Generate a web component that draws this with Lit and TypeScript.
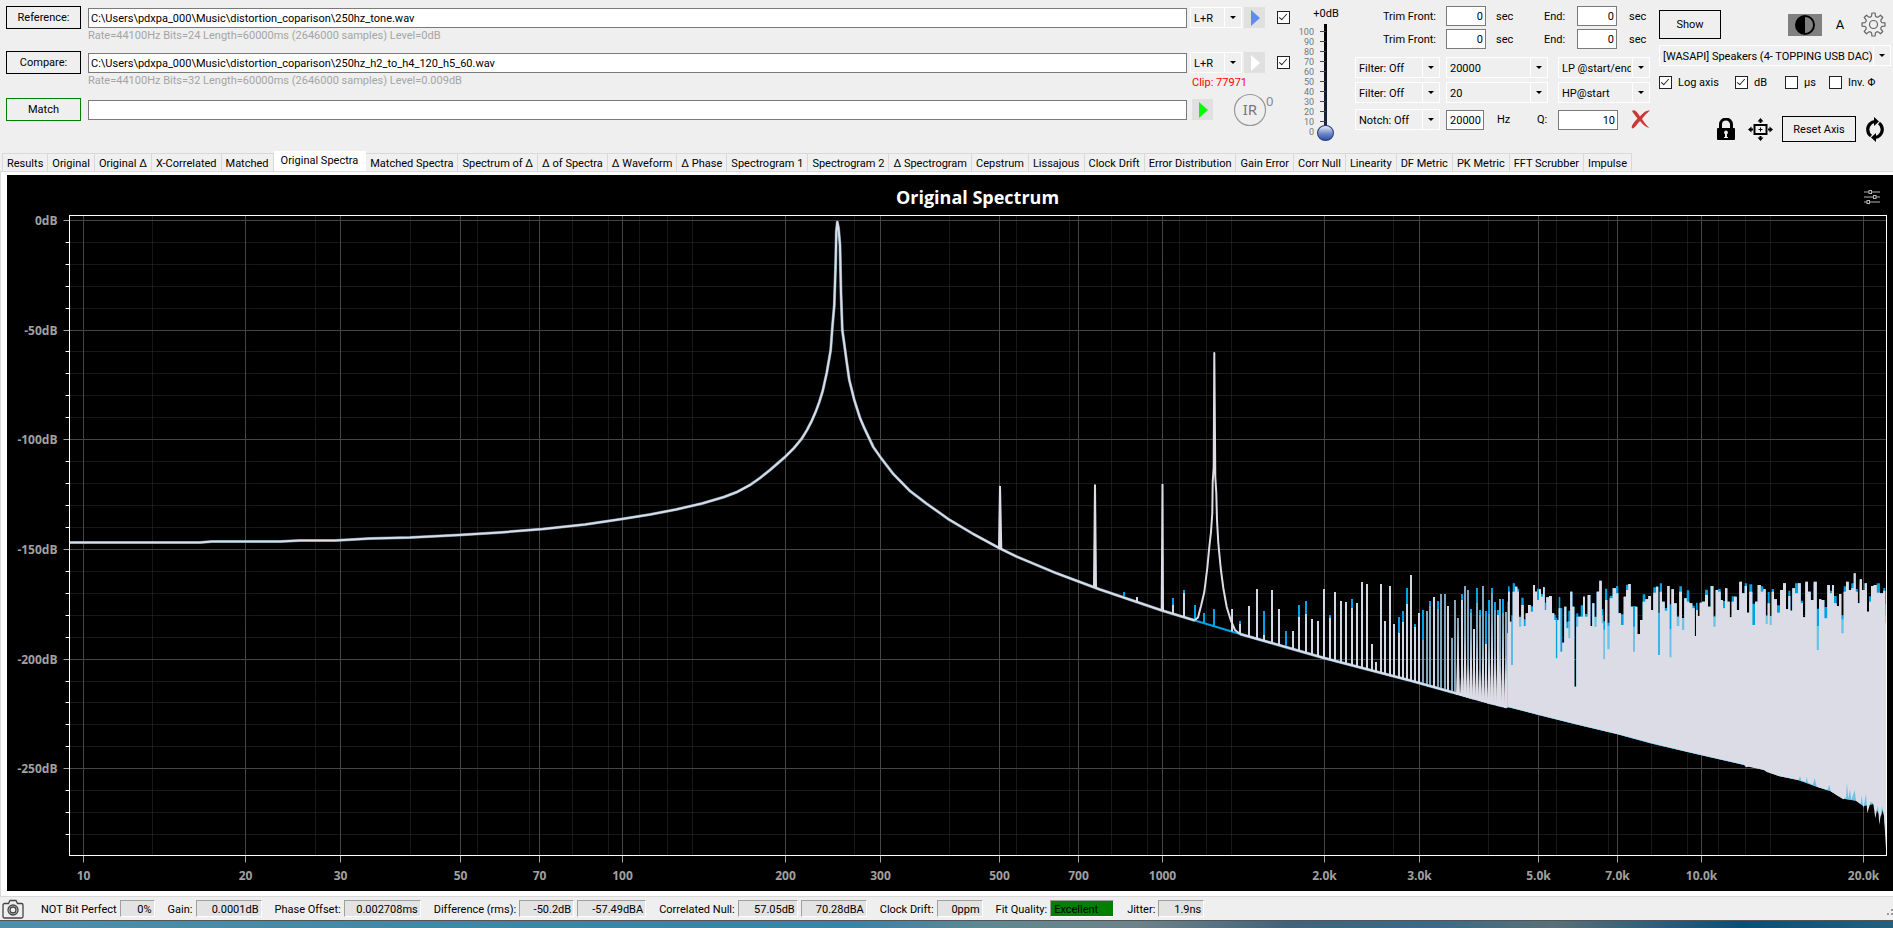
import { LitElement, html, svg, css } from "lit";
import { customElement, state, property } from "lit/decorators.js";

type Pt = [number, number];

const controls = css`
  *, *::before, *::after { box-sizing: border-box; }
  button, input, select, output { font: inherit; color: inherit; margin: 0; }
  button { padding: 0; border: 0; background: none; }
  svg { display: block; }
`;

/* ---------- Combo box ---------- */
@customElement("combo-box")
class ComboBox extends LitElement {
  @property({ type: Array }) options: string[] = [];
  @property() label = "";
  static styles = [controls, css`
    :host { display: block; position: relative; height: 21px; font: 11px/13px Roboto, "Liberation Sans", sans-serif; color: #000; }
    select { appearance: none; display: block; width: 100%; height: 100%; border: 1px solid #fff; border-radius: 0; background: #efefef; padding: 1px 18px 0 3px; }
    svg { position: absolute; right: 1px; top: 1px; width: 17px; height: calc(100% - 2px); background: #efefef; border-left: 1px solid #fff; pointer-events: none; }
  `];
  render() {
    return html`<select aria-label=${this.label}>${this.options.map((o) => html`<option>${o}</option>`)}</select>
      <svg viewBox="0 0 16 19"><path d="M5 8h6l-3 3z" fill="#000"/></svg>`;
  }
}

/* ---------- Spectrum trace data, in plot units ---------- */
const BOX = { x: 69.5, y: 215.5, w: 1817, h: 640 };

const CURVE: Pt[] = [
  [69, 542.5], [200, 542.5], [212, 541.5], [280, 541.5], [300, 540.5], [335, 540.5], [370, 538.5], [410, 537.5], [459, 535], [500, 532.5],
  [543, 529], [585, 524.5], [622, 519], [650, 514.5], [676, 509.5], [702, 503.5], [724, 497], [737, 492], [750, 485], [760, 478], [770, 470],
  [785, 457], [794, 448], [801.7, 438.7], [807, 430], [811.7, 421], [816, 411], [819.3, 402], [822.7, 391], [826.7, 373], [830.7, 350],
  [832.3, 328], [834.3, 305], [835.7, 262], [836.3, 232], [837.3, 222], [838.5, 228], [840, 245], [841, 293], [842.3, 330], [844, 342],
  [846.7, 362], [849.3, 380], [854.3, 400], [860, 418], [864.3, 428], [873.3, 447], [881, 458], [893.3, 474], [910, 491], [926.7, 503.7],
  [949.3, 519.7], [973.3, 534], [1000, 548.5], [1016.7, 556.7], [1056.7, 573.3], [1093.3, 587], [1100, 589.5], [1162, 610.5], [1195, 620.5],
];
const FLOOR: Pt[] = [[1195, 620.5], [1240, 634], [1324, 658], [1412, 681], [1490, 702.7], [1507, 707]];
const FIFTH: Pt[] = [
  [1195, 620], [1198, 617.5], [1201, 606], [1204.3, 592], [1207.3, 568], [1209.3, 547], [1211, 532], [1212.3, 513], [1212.7, 482],
  [1213.7, 467], [1214.3, 353], [1215.3, 477], [1216.3, 493], [1217, 520], [1218.3, 543], [1220.7, 568], [1223.3, 588], [1226.7, 607],
  [1230.7, 620], [1235, 630], [1240, 634],
];

// column, level of the compare trace, level of the reference trace (0 = absent)
const SPIKES: [number, number, number][] = [
  [1124, 0, 592], [1137, 597, 0], [1173, 605, 598], [1184, 593, 590], [1195, 0, 605], [1204, 0, 613], [1214, 0, 609], [1232, 609, 0],
  [1240, 624, 621], [1249, 606, 607], [1257, 589, 589], [1264, 635, 611], [1272, 590, 590], [1279, 609, 640], [1286, 0, 631], [1293, 631, 0],
  [1299, 617, 605], [1306, 614, 601], [1312, 619, 0], [1318, 621, 0], [1324, 589, 590], [1330, 618, 615], [1335, 592, 0], [1341, 601, 625],
  [1346, 602, 640], [1352, 608, 599], [1357, 603, 604], [1362, 582, 600], [1367, 584, 585], [1372, 644, 644], [1376, 662, 0], [1381, 584, 590],
  [1385, 621, 0], [1390, 586, 600], [1394, 624, 630], [1399, 633, 617], [1403, 622, 611], [1407, 604, 588], [1411, 575, 580], [1415, 627, 624],
  [1419, 613, 614], [1423, 640, 610], [1427, 611, 611], [1430, 606, 601], [1434, 597, 600], [1438, 609, 601], [1441, 594, 600], [1445, 594, 610],
  [1448, 606, 610], [1452, 638, 640], [1455, 600, 601], [1458, 618, 620], [1462, 600, 594], [1465, 586, 590], [1468, 590, 600], [1471, 613, 609],
  [1474, 629, 630], [1477, 603, 588], [1480, 615, 610], [1483, 586, 590], [1486, 644, 611], [1489, 614, 600], [1492, 593, 588], [1495, 610, 602],
  [1498, 615, 610], [1500, 599, 600], [1503, 613, 599], [1506, 612, 620],
];

// Dense part of the spectrum: thirds of a plot unit from (1490, 560)
const TOP: Pt[] = [
  [52, 220], [56, 95], [62, 185], [66, 315], [70, 95], [80, 80], [84, 95], [90, 200], [98, 135], [104, 198], [110, 160], [118, 135], [126, 155],
  [132, 75], [138, 95], [144, 120], [150, 88], [156, 110], [162, 82], [166, 150], [172, 112], [182, 108], [190, 160], [195, 180], [200, 295],
  [204, 180], [208, 145], [214, 275], [220, 248], [226, 140], [232, 205], [238, 235], [244, 95], [250, 140], [256, 380], [262, 200], [268, 170],
  [276, 170], [282, 110], [288, 170], [298, 105], [304, 198], [310, 130], [316, 200], [324, 95], [332, 62], [338, 190], [342, 298], [348, 120],
  [356, 268], [362, 115], [374, 85], [382, 100], [388, 160], [398, 195], [404, 110], [412, 90], [418, 72], [426, 140], [432, 275], [438, 140],
  [446, 222], [454, 180], [462, 125], [470, 118], [480, 108], [486, 150], [494, 98], [502, 80], [507, 285], [512, 95], [520, 125], [528, 152],
  [536, 78], [541, 292], [548, 88], [556, 130], [564, 198], [572, 95], [580, 210], [586, 115], [594, 125], [602, 130], [612, 145], [616, 228],
  [620, 150], [626, 168], [632, 128], [640, 125], [650, 105], [658, 140], [666, 78], [674, 200], [680, 90], [688, 95], [696, 120], [702, 145],
  [708, 85], [716, 125], [722, 172], [728, 125], [736, 110], [744, 150], [752, 65], [760, 100], [768, 78], [774, 158], [782, 95], [792, 195],
  [798, 125], [808, 75], [816, 95], [824, 88], [830, 192], [836, 130], [842, 195], [848, 95], [856, 118], [866, 158], [874, 90], [884, 70],
  [892, 148], [898, 108], [904, 152], [910, 85], [920, 100], [928, 70], [936, 130], [942, 172], [950, 65], [958, 95], [966, 120], [976, 65],
  [984, 270], [990, 118], [998, 120], [1008, 175], [1016, 75], [1024, 100], [1028, 75], [1036, 130], [1044, 138], [1050, 102], [1058, 220],
  [1064, 95], [1072, 65], [1080, 90], [1088, 85], [1094, 40], [1100, 95], [1106, 130], [1112, 58], [1120, 90], [1128, 70], [1134, 155],
  [1140, 125], [1146, 78], [1156, 75], [1164, 98], [1176, 100], [1184, 92], [1188, 190],
];
const BOTTOM: Pt[] = [
  [52, 440], [148, 465], [256, 492], [382, 522], [486, 550], [592, 575], [634, 585], [700, 600], [762, 614], [768, 622], [776, 620], [822, 630],
  [830, 636], [866, 648], [926, 660], [930, 648], [934, 662], [948, 666], [950, 650], [954, 668], [968, 674], [974, 655], [980, 680], [1012, 690],
  [1018, 674], [1022, 694], [1040, 706], [1060, 718], [1068, 712], [1071, 668], [1075, 715], [1080, 688], [1084, 720], [1094, 690], [1098, 722],
  [1112, 732], [1115, 706], [1120, 745], [1128, 702], [1132, 760], [1142, 725], [1150, 730], [1156, 775], [1164, 735], [1168, 795], [1176, 738],
  [1182, 768], [1188, 868],
];
const BOTTOM_REF: Pt[] = [
  [52, 441], [148, 466], [256, 493], [382, 523], [486, 551], [592, 576], [634, 586], [700, 601], [762, 615], [822, 630], [866, 648], [926, 661],
  [980, 680], [1022, 694], [1060, 716], [1098, 722], [1120, 738], [1150, 732], [1172, 770], [1180, 745], [1188, 830],
];

const dense = ([x, y]: Pt): Pt => [1490 + x / 3, 560 + y / 3];
const line = (pts: Pt[]) => pts.map(([x, y]) => `${x.toFixed(1)},${y.toFixed(1)}`).join(" ");

// Steps halfway between neighbouring bins, so every bin shows as a flat column
function columns(pts: Pt[]): Pt[] {
  const out: Pt[] = [];
  pts.forEach(([x, y], i) => {
    const l = i ? (pts[i - 1][0] + x) / 2 : x;
    const r = i < pts.length - 1 ? (pts[i + 1][0] + x) / 2 : x;
    out.push([l, y], [r, y]);
  });
  return out;
}

function floorAt(x: number): number {
  const pts = [...CURVE.slice(-4), ...FLOOR.slice(1)];
  for (let i = 1; i < pts.length; i++) {
    if (x <= pts[i][0]) {
      const [a, b] = [pts[i - 1], pts[i]];
      return a[1] + ((x - a[0]) / (b[0] - a[0])) * (b[1] - a[1]);
    }
  }
  return pts[pts.length - 1][1];
}

const DARK = [256, 446, 616, 722, 220, 304];
const BLUE_TOP: Pt[] = TOP.map(([x, y], i) => {
  if (DARK.includes(x)) return [x, y];
  const lift = [0, 16, 0, 0, 34, 0, 8, 0, 22, 0, 0][i % 11];
  return [x, y > 188 ? Math.min(y, 125 + ((i * 37) % 70)) : Math.max(70, y - lift)];
});
const LIGHT_TOP: Pt[] = TOP.map(([x, y], i) => [x, y > 188 && i % 3 && !DARK.includes(x) ? y - (y - 150) * 0.6 : y]);
const area = (top: Pt[], bottom: Pt[]) => line([...columns(top.map(dense)), ...[...bottom].reverse().map(dense)]);

/* ---------- Spectrum chart ---------- */
const MAJOR: [number, string][] = [
  [10, "10"], [20, "20"], [30, "30"], [50, "50"], [70, "70"], [100, "100"], [200, "200"], [300, "300"], [500, "500"], [700, "700"],
  [1000, "1000"], [2000, "2.0k"], [3000, "3.0k"], [5000, "5.0k"], [7000, "7.0k"], [10000, "10.0k"], [20000, "20.0k"],
];

@customElement("spectrum-chart")
class SpectrumChart extends LitElement {
  @state() w = 1886;
  @state() h = 680;
  private ro?: ResizeObserver;
  static styles = [controls, css`
    :host { display: flex; flex-direction: column; background: #000; min-width: 0; min-height: 300px; }
    header { display: flex; align-items: center; height: 36px; padding: 8px 13px 0 84px; color: #fff; flex: none; }
    h1 { flex: 1; margin: 0; text-align: center; font: 700 18px/28px "Open Sans", "Noto Sans", sans-serif; }
    .view { flex: 1; min-height: 0; position: relative; }
    .view > svg { position: absolute; inset: 0; }
    text { font: 700 12px "Open Sans", "Noto Sans", sans-serif; fill: #a0a0a0; }
    .major { stroke: #454545; }
    .minor { stroke: #333; stroke-dasharray: 1 1; }
    .tick { stroke: #a6a6a6; }
    .frame { fill: none; stroke: #fff; }
    .tw { stroke: #fff; }
    .trace { fill: none; vector-effect: non-scaling-stroke; stroke-linejoin: round; }
    .glow { stroke: #7fb2cf; stroke-width: 3px; opacity: .7; }
    .white { stroke: #dcdce6; stroke-width: 2px; }
    .blue { stroke: #00a2e8; stroke-width: 2px; }
    .thin { stroke: #cfd8e4; stroke-width: 2px; }
    .soft { stroke: #7fa6bd; stroke-width: 2px; }
  `];
  firstUpdated() {
    const view = this.renderRoot.querySelector(".view")!;
    this.ro = new ResizeObserver(() => {
      const r = view.getBoundingClientRect();
      this.w = Math.round(r.width);
      this.h = Math.round(r.height);
    });
    this.ro.observe(view);
  }
  disconnectedCallback() {
    super.disconnectedCallback();
    this.ro?.disconnect();
  }
  render() {
    const { w, h } = this;
    const L = 62.5, T = 4.5, R = w - 6.5, B = h - 35.5;
    const px = (f: number) => Math.floor(L + ((13.9 + 539.3 * Math.log10(f / 10)) / BOX.w) * (R - L)) + 0.5;
    const py = (db: number) => Math.floor(T + ((4.8 - db * 2.194) / BOX.h) * (B - T)) + 0.5;
    const minorF: number[] = [];
    for (const d of [10, 100, 1000, 10000]) for (let n = 1; n <= 8; n++) if (n * 1.345 * d < 14000) minorF.push(n * 1.345 * d);
    minorF.push(121, 1210, 12100);
    const dbs = Array.from({ length: 29 }, (_, i) => -10 * i);
    return html`
      <header><h1>Original Spectrum</h1>
        <button aria-label="Chart options"><svg width="16" height="16" viewBox="0 0 16 16" fill="none" stroke="#b4b4b4"><path d="M0 3h5M8 3h8M0 8h9M12 8h4M0 13h3M6 13h10"/><rect x="5" y="1.500" width="2.500" height="3"/><rect x="9.500" y="6.500" width="2.500" height="3"/><rect x="3" y="11.500" width="2.500" height="3"/></svg></button>
      </header>
      <div class="view"><svg width=${w} height=${h} role="img" aria-label="Spectrum level against frequency">
        ${minorF.map((f) => svg`<path class="minor" d="M${px(f)} ${T}V${B}"/>`)}
        ${dbs.map((d) => d % 50
          ? svg`<path class="minor" d="M${L} ${py(d)}H${R}"/><path class="tw" d="M${L - 4} ${py(d)}H${L}"/>`
          : svg`<path class="major" d="M${L} ${py(d)}H${R}"/><path class="tick" d="M${L - 6} ${py(d)}H${L}"/>
                <text x=${L - 12} y=${py(d) + 4} text-anchor="end">${d}dB</text>`)}
        ${MAJOR.map(([f, t]) => svg`<path class="major" d="M${px(f)} ${T}V${B}"/><path class="tick" d="M${px(f)} ${B}V${B + 7}"/>
                <text x=${px(f)} y=${B + 24} text-anchor="middle">${t}</text>`)}
        <svg x=${L} y=${T} width=${R - L} height=${B - T} viewBox="${BOX.x} ${BOX.y} ${BOX.w} ${BOX.h}" preserveAspectRatio="none">
          <polyline class="trace blue" points=${line(FLOOR)}/>
          <polyline class="trace glow" points=${line(CURVE)}/>
          <polyline class="trace glow" points=${line(FLOOR.slice(1))}/>
          ${SPIKES.map(([x, c, r], i) => svg`
            ${r ? svg`<path class="trace blue" d="M${x} ${floorAt(x)}V${r}"/>` : null}
            ${c ? svg`<path class="trace ${x > 1417 && i % 4 ? "soft" : "thin"}" d="M${x} ${floorAt(x)}V${c}"/>` : null}
            ${x > 1455 ? svg`<path fill="#dcdce6" d="M${x - 2} ${floorAt(x) + 1}L${x} ${floorAt(x) - 30 - ((i * 29) % 60)}L${x + 2} ${floorAt(x) + 1}z"/>` : null}`)}
          <polyline class="trace white" points=${line(CURVE)}/>
          <polyline class="trace white" points=${line(FLOOR.slice(1))}/>
          <polyline class="trace white" points=${line(FIFTH)}/>
          <polygon fill="#dcdce6" points="998,548 999,486 1001,486 1002.300,549"/>
          <polygon fill="#dcdce6" points="1093,586 1094,484.500 1096,484.500 1097,588"/>
          <polygon fill="#dcdce6" points="1160.700,610 1161.500,484 1163.500,484 1164,611"/>
          <polygon fill="#00a2e8" points=${area(BLUE_TOP, BOTTOM_REF)}/>
          <polygon fill="#6fc2e6" points=${area(LIGHT_TOP, BOTTOM_REF)}/>
          <polygon fill="#dcdce6" points=${area(TOP, BOTTOM)}/>
        </svg>
        <rect class="frame" x=${L} y=${T} width=${R - L} height=${B - T}/>
      </svg></div>`;
  }
}

/* ---------- Application window ---------- */
const TABS = ["Results", "Original", "Original Δ", "X-Correlated", "Matched", "Original Spectra", "Matched Spectra", "Spectrum of Δ",
  "Δ of Spectra", "Δ Waveform", "Δ Phase", "Spectrogram 1", "Spectrogram 2", "Δ Spectrogram", "Cepstrum", "Lissajous", "Clock Drift",
  "Error Distribution", "Gain Error", "Corr Null", "Linearity", "DF Metric", "PK Metric", "FFT Scrubber", "Impulse"];

const STATUS: [string, [string, string][]][] = [
  ["NOT Bit Perfect", [["0%", "w34"]]],
  ["Gain:", [["0.0001dB", "w66"]]],
  ["Phase Offset:", [["0.002708ms", "w77"]]],
  ["Difference (rms):", [["-50.2dB", "w56"], ["-57.49dBA", "w70"]]],
  ["Correlated Null:", [["57.05dB", "w60"], ["70.28dBA", "w66"]]],
  ["Clock Drift:", [["0ppm", "w45"]]],
  ["Fit Quality:", [["Excellent", "good"]]],
  ["Jitter:", [["1.9ns", "w45"]]],
];

@customElement("app-root")
class AppRoot extends LitElement {
  @state() tab = "Original Spectra";
  static styles = [controls, css`
    :host { display: flex; flex-direction: column; min-height: 100vh; background: #efefef; color: #000; font: 11px/13px Roboto, "Liberation Sans", sans-serif; }
    .bar { display: flex; align-items: flex-start; padding: 6px 2px 0 6px; height: 152px; }
    .files { flex: 1; min-width: 0; margin-right: 7px; }
    .file { display: flex; align-items: center; height: 23px; }
    .info { display: flex; justify-content: space-between; color: #a5a5a5; padding-left: 82px; }
    .info.a { height: 22px; }
    .info.b { height: 24px; }
    .clip { width: 98px; color: #f00; padding-top: 2px; }
    .cmd { border: 1px solid #000; background: #efefef; height: 23px; width: 75px; flex: none; margin-right: 7px; }
    .cmd.go { border-color: #008000; }
    .field { border: 1px solid #7a7a7a; background: #fff; height: 20px; padding: 1px 2px 0; border-radius: 0; min-width: 0; }
    .path { flex: 1; }
    .num { text-align: right; width: 40px; }
    .tail { display: flex; align-items: center; width: 103px; flex: none; padding-left: 3px; }
    .tail combo-box { width: 52px; margin-right: 2px; }
    .play { width: 21px; height: 21px; background: #e0e0e0; flex: none; }
    .play svg { margin-left: 7px; }
    .tick { appearance: none; width: 13px; height: 13px; border: 1px solid #222; background: #fff; position: relative; flex: none; }
    .tick:checked::after { content: ""; position: absolute; left: 3px; top: 0; width: 4px; height: 8px; border: solid #222; border-width: 0 1px 1px 0; transform: rotate(42deg); }
    .tail .tick { margin-left: 12px; }
    .tail .match { margin-left: 2px; margin-right: 20px; }
    .ir { display: flex; }

    .gain { width: 50px; margin-right: 8px; }
    .gain label { display: block; text-align: center; padding-left: 8px; line-height: 15px; }
    .scale { display: grid; grid-template-columns: 17px 3px 17px; justify-content: start; margin-top: 3px; }
    .marks { display: grid; grid-template-rows: repeat(11, 10px); font-size: 9px; line-height: 10px; color: #777; text-align: right; padding-top: 3px; }
    .ticks { padding-top: 4px; position: relative; left: 6px; }
    .range { appearance: none; writing-mode: vertical-lr; direction: rtl; width: 17px; height: 117px; background: linear-gradient(#000, #1b2440) center top / 3px 104px no-repeat; }
    .range::-webkit-slider-thumb { appearance: none; width: 17px; height: 16px; border-radius: 50%; border: 1px solid #243a7c; background: linear-gradient(#e8edf7, #6f88c6 55%, #2e4fa8); }

    .filters { width: 295px; margin-right: 9px; }
    .row { display: flex; align-items: center; }
    .trim { margin-bottom: 3px; }
    .trim .front { width: 81px; text-align: right; margin-right: 10px; }
    .trim .sec { width: 48px; margin-left: 10px; }
    .trim .end { width: 33px; }
    .trim .sec2 { margin-left: 12px; }
    .combos { margin-top: 4px; }
    .combos.first { margin-top: 8px; }
    .combos.notch { margin-top: 6px; }
    .c85 { width: 85px; margin-right: 6px; }
    .c102 { width: 102px; margin-right: 10px; }
    .c92 { width: 92px; }
    .freq { width: 38px; }
    .hz { width: 40px; margin-left: 13px; }
    .q { width: 21px; }
    .qv { width: 60px; margin-right: 13px; }

    .side { width: 232px; padding-top: 4px; }
    .show { height: 29px; width: 62px; margin-right: auto; }
    .tone { width: 34px; height: 22px; background: #808080; display: grid; place-items: center; }
    .font { width: 36px; text-align: center; font-size: 13px; }
    .gear { margin: 0 5px 0 3px; }
    .device { margin-top: 6px; }
    .checks { margin-top: 10px; height: 13px; }
    .checks label { display: flex; align-items: center; gap: 6px; white-space: nowrap; }
    .checks .k1 { width: 76px; } .checks .k2 { width: 50px; } .checks .k3 { width: 44px; }
    .axis { margin-top: 27px; justify-content: flex-end; padding-right: 6px; }
    .axis .cmd { width: 74px; height: 26px; margin: 0 9px; }
    .axis .lock { margin-right: 12px; }

    nav { display: flex; align-items: flex-end; height: 19px; padding-left: 2px; }
    .tab { height: 18px; border: 1px solid #d9d9d9; border-width: 1px 1px 0 0; padding: 1px 4px 0; flex: none; background: #f0f0f0; white-space: nowrap; }
    .tab:first-child { border-left-width: 1px; }
    .tab.on { background: #fff; border-color: #fff; height: 20px; padding: 0 7px 3px; }
    main { flex: 1; display: flex; flex-direction: column; background: #fff; border: 1px solid #d9d9d9; border-right: 0; padding: 3px 0 5px 6px; }
    spectrum-chart { flex: 1; }
    footer { display: flex; align-items: center; height: 24px; padding-left: 2px; border-bottom: 1px solid #555; }
    .cam { margin-right: 17px; }
    .stat { display: flex; align-items: center; gap: 3px; margin-right: 13px; white-space: nowrap; }
    .stat span { padding-top: 2px; }
    .stat output { display: block; height: 17px; line-height: 17px; text-align: right; padding-right: 2px; background: #e3e3e3; border: 1px solid; border-color: #a0a0a0 #fff #fff #a0a0a0; }
    .w34 { width: 35px; } .w45 { width: 46px; } .w56 { width: 55px; } .w60 { width: 60px; } .w66 { width: 66px; } .w70 { width: 69px; } .w77 { width: 77px; }
    .stat .good { width: 64px; background: #008000; text-align: left; padding-left: 3px; }
    .grip { margin: 8px 0 0 auto; }
    .desk { height: 7px; background: linear-gradient(90deg, #4d8fa9, #3d84a5 30%, #3a82a8 45%, #5f8791 52%, #6c838b 60%, #42627a 68%, #3a6a86 76%, #5a6f78 82%, #0a4f78 92%, #22607f); }
  `];

  private playButton(color: string, label: string, cls = "") {
    return html`<button class="play ${cls}" aria-label=${label}><svg width="9" height="16" viewBox="0 0 9 16"><path d="M0 0l9 8l-9 8z" fill=${color}/></svg></button>`;
  }

  private trim(n: number) {
    return html`<div class="row trim">
      <label class="front" for="front${n}">Trim Front:</label><input id="front${n}" class="field num" value="0"><span class="sec">sec</span>
      <label class="end" for="end${n}">End:</label><input id="end${n}" class="field num" value="0"><span class="sec2">sec</span></div>`;
  }

  private gear() {
    let d = "";
    for (let i = 0; i < 8; i++) {
      [[-0.22, 8.7], [-0.14, 11.6], [0.14, 11.6], [0.22, 8.7], [0.39, 8]].forEach(([a, r], k) => {
        const t = (i * Math.PI) / 4 + a;
        d += `${i || k ? "L" : "M"}${(12.5 + r * Math.sin(t)).toFixed(2)} ${(12.5 - r * Math.cos(t)).toFixed(2)}`;
      });
    }
    return html`<svg width="25" height="25" viewBox="0 0 25 25" fill="none" stroke="#666" stroke-width="1.200" stroke-linejoin="round"><path d="${d}z"/><circle cx="12.500" cy="12.500" r="4"/></svg>`;
  }

  render() {
    return html`
      <div class="bar">
        <section class="files">
          <div class="file"><button class="cmd">Reference:</button>
            <input class="field path" aria-label="Reference file" value="C:\\Users\\pdxpa_000\\Music\\distortion_coparison\\250hz_tone.wav">
            <div class="tail"><combo-box label="Reference channel" .options=${["L+R", "L", "R"]}></combo-box>${this.playButton("#5b8def", "Play reference")}<input class="tick" type="checkbox" aria-label="Use reference" checked></div></div>
          <div class="info a"><span>Rate=44100Hz Bits=24 Length=60000ms (2646000 samples) Level=0dB</span></div>
          <div class="file"><button class="cmd">Compare:</button>
            <input class="field path" aria-label="Compare file" value="C:\\Users\\pdxpa_000\\Music\\distortion_coparison\\250hz_h2_to_h4_120_h5_60.wav">
            <div class="tail"><combo-box label="Compare channel" .options=${["L+R", "L", "R"]}></combo-box>${this.playButton("#fff", "Play compare")}<input class="tick" type="checkbox" aria-label="Use compare" checked></div></div>
          <div class="info b"><span>Rate=44100Hz Bits=32 Length=60000ms (2646000 samples) Level=0.009dB</span><span class="clip">Clip: 77971</span></div>
          <div class="file"><button class="cmd go">Match</button>
            <input class="field path" aria-label="Match file">
            <div class="tail">${this.playButton("#0f0", "Play match", "match")}
              <button class="ir" aria-label="Impulse response"><svg width="44" height="34" viewBox="0 0 44 34"><circle cx="17" cy="17" r="15.500" fill="none" stroke="#999" stroke-width="1.200"/><text x="17" y="22" text-anchor="middle" font-family="Noto Sans" font-size="15" fill="#777">IR</text><text x="33" y="13" font-family="Noto Sans" font-size="13" fill="#888">0</text></svg></button></div></div>
        </section>

        <section class="gain">
          <label for="gain">+0dB</label>
          <div class="scale">
            <div class="marks">${[100, 90, 80, 70, 60, 50, 40, 30, 20, 10, 0].map((n) => html`<span>${n}</span>`)}</div>
            <svg class="ticks" width="6" height="112" viewBox="0 0 6 108" stroke="#444">${Array.from({ length: 10 }, (_, i) => svg`<path d="M0 ${i * 10 + 3.5}h6"/>`)}</svg>
            <input id="gain" class="range" type="range" min="0" max="100" value="0">
          </div>
        </section>

        <section class="filters">
          ${this.trim(1)}${this.trim(2)}
          <div class="row combos first"><combo-box class="c85" label="Low-pass filter" .options=${["Filter: Off"]}></combo-box><combo-box class="c102" label="Low-pass frequency" .options=${["20000"]}></combo-box><combo-box class="c92" label="Low-pass mode" .options=${["LP @start/end"]}></combo-box></div>
          <div class="row combos"><combo-box class="c85" label="High-pass filter" .options=${["Filter: Off"]}></combo-box><combo-box class="c102" label="High-pass frequency" .options=${["20"]}></combo-box><combo-box class="c92" label="High-pass mode" .options=${["HP@start"]}></combo-box></div>
          <div class="row combos notch"><combo-box class="c85" label="Notch filter" .options=${["Notch: Off"]}></combo-box>
            <input id="notch" class="field num freq" value="20000"><label class="hz" for="notch">Hz</label>
            <label class="q" for="q">Q:</label><input id="q" class="field num qv" value="10">
            <button aria-label="Clear filters"><svg width="19" height="19" viewBox="0 0 19 19"><path d="M1 1C4 -1 6 2 9 6.500C12 3 15 0 19 .5C16 3 13 6 11 9C13 12 16 16 18.500 18C14 17 11.500 14 9 11C6 14 4 18 1.500 18.500C-.5 18 1 14 6.500 8.500C4 5 2 3 1 1z" fill="#cc3636"/></svg></button></div>
        </section>

        <section class="side">
          <div class="row"><button class="cmd show">Show</button>
            <button class="tone" aria-label="Contrast"><svg width="22" height="22" viewBox="0 0 22 22"><circle cx="11" cy="11" r="9" fill="none" stroke="#000" stroke-width="2"/><path d="M11 2a9 9 0 0 0 0 18z"/></svg></button>
            <button class="font">A</button><button class="gear" aria-label="Settings">${this.gear()}</button></div>
          <combo-box class="device" label="Output device" .options=${["[WASAPI] Speakers (4- TOPPING USB DAC)"]}></combo-box>
          <div class="row checks">
            <label class="k1"><input class="tick" type="checkbox" checked>Log axis</label>
            <label class="k2"><input class="tick" type="checkbox" checked>dB</label>
            <label class="k3"><input class="tick" type="checkbox">µs</label>
            <label><input class="tick" type="checkbox">Inv. Φ</label></div>
          <div class="row axis">
            <button class="lock" aria-label="Lock"><svg width="20" height="23" viewBox="0 0 20 23"><path d="M4.500 11V6.500a5.500 5.500 0 0 1 11 0V11" fill="none" stroke="#000" stroke-width="3"/><rect x="1" y="10" width="18" height="12" rx="1"/><path d="M10 12.500a2 2 0 0 1 1 3.700V19h1v1H8v-1h1v-2.800a2 2 0 0 1 1-3.700z" fill="#eee"/></svg></button>
            <button aria-label="Fit view"><svg width="25" height="23" viewBox="0 0 25 23"><rect x="6.500" y="7" width="12" height="9" fill="none" stroke="#000" stroke-width="2"/><path d="M12.500 0l3 3.500h-2V5h-2V3.500h-2zM12.500 23l3-3.500h-2V18h-2v1.500h-2zM0 11.500l3.500-3v2H5v2H3.500v2zM25 11.500l-3.500-3v2H20v2h1.500v2z"/><path d="M12.500 9.500v4M10.500 11.500h4" stroke="#000"/></svg></button>
            <button class="cmd">Reset Axis</button>
            <button aria-label="Refresh"><svg width="20" height="25" viewBox="0 0 20 25"><path d="M6 19A8 8 0 0 1 5.500 6.500Q7 4.800 10 4.500M14 6A8 8 0 0 1 14.500 18.500Q13 20.200 10 20.500" fill="none" stroke="#000" stroke-width="3.200"/><path d="M9 0v9l5-4.500zM11 25v-9l-5 4.500z"/></svg></button></div>
        </section>
      </div>

      <nav role="tablist">${TABS.map((t) => html`<button role="tab" aria-selected=${t === this.tab} class="tab ${t === this.tab ? "on" : ""}" @click=${() => (this.tab = t)}>${t}</button>`)}</nav>
      <main><spectrum-chart></spectrum-chart></main>
      <footer>
        <button class="cam" aria-label="Screenshot"><svg width="22" height="20" viewBox="0 0 22 20" fill="none" stroke="#444" stroke-width="1.300"><path d="M2.500 4.500h4l1.500-3h6l1.500 3h4a1.500 1.500 0 0 1 1.500 1.500v11.500a1.500 1.500 0 0 1-1.500 1.500h-17A1.500 1.500 0 0 1 1 17.500V6a1.500 1.500 0 0 1 1.500-1.500z"/><circle cx="11" cy="11" r="5"/><circle cx="11" cy="11" r="3"/></svg></button>
        ${STATUS.map(([label, boxes]) => html`<div class="stat"><span>${label}</span>${boxes.map(([v, c]) => html`<output class=${c} aria-label=${label}>${v}</output>`)}</div>`)}
        <svg class="grip" width="6" height="10" viewBox="0 0 6 10" fill="#999"><path d="M4 1h2v2H4zM0 5h2v2H0zM4 5h2v2H4z"/></svg>
      </footer>
      <div class="desk"></div>`;
  }
}
